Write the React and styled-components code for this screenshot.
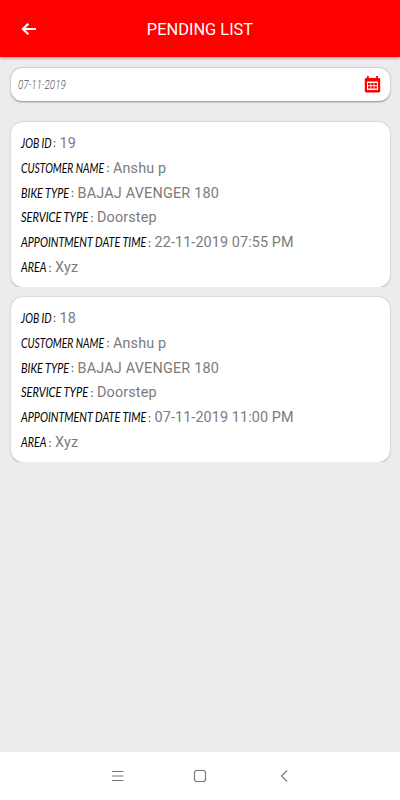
import React from "react";
import styled, { createGlobalStyle } from "styled-components";

const GlobalStyle = createGlobalStyle`
  * { box-sizing: border-box; }
  body { margin: 0; background: #edebee; font-family: Roboto, sans-serif; }
`;

const Screen = styled.div`
  display: flex;
  flex-direction: column;
  height: 800px;
  background: #edebee;
`;

const Header = styled.header`
  display: grid;
  grid-template-columns: 57px 1fr 57px;
  align-items: center;
  height: 57px;
  flex: none;
  background: #ff0000;
  color: #fff;
  box-shadow: 0 1px 3px rgba(0, 0, 0, 0.4);
`;

const BackButton = styled.button`
  display: flex;
  justify-content: center;
  padding: 0;
  border: 0;
  background: none;
  color: inherit;
`;

const Title = styled.h1`
  margin: 0;
  padding-top: 2px;
  font-size: 16.4px;
  font-weight: 400;
  line-height: 20px;
  text-align: center;
  white-space: nowrap;
`;

const Content = styled.main`
  flex: 1;
  padding: 11px 10px 0;
`;

const DateField = styled.div`
  display: flex;
  align-items: center;
  justify-content: space-between;
  height: 33px;
  margin: 0 0.5px;
  padding: 0 8.5px 0 7.5px;
  border-radius: 11px;
  background: #fff;
  box-shadow: 0 0.5px 2px rgba(0, 0, 0, 0.42);
`;

const DateText = styled.span`
  display: block;
  width: 48px;
  padding-top: 1px;
  color: #555;
  font: italic 300 12.5px/16px Roboto, sans-serif;
  white-space: nowrap;
  transform: scaleX(0.785);
  transform-origin: left center;
`;

const Jobs = styled.section`
  display: flex;
  flex-direction: column;
  gap: 10px;
  margin-top: 21px;
`;

const Card = styled.article`
  height: 165px;
  margin: 0 0.5px;
  padding: 9px 10.5px 0;
  border-radius: 12px;
  background: #fff;
  box-shadow: 0 0.5px 2px rgba(0, 0, 0, 0.26);
  clip-path: inset(-3px -3px 0 -3px);
`;

const Row = styled.div`
  display: flex;
  align-items: center;
  height: 24.85px;
  white-space: nowrap;
`;

const LabelBox = styled.span`
  flex: none;
  width: ${(p) => p.$width}px;
  padding-bottom: 2px;
`;

const Label = styled.span`
  display: inline-block;
  color: #000;
  font: italic 400 13.5px/18px Lato, sans-serif;
  transform: scaleX(${(p) => p.$scale});
  transform-origin: left center;
`;

const Colon = styled.span`
  width: 6.5px;
  flex: none;
  color: #555;
  font: 12px/18px Lato, sans-serif;
`;

const Value = styled.span`
  padding-top: 1px;
  color: #7b7b7b;
  font-size: 14.4px;
  line-height: 20px;
  letter-spacing: ${(p) => p.$spacing ?? 0.14}px;
`;

const NavBar = styled.nav`
  display: flex;
  justify-content: center;
  align-items: center;
  gap: 66px;
  height: 48px;
  flex: none;
  background: #fff;
  color: #777;
  & > svg { display: block; }
`;

const fields = [
  { key: "id", label: "JOB ID", width: 32, scale: 0.77 },
  { key: "customer", label: "CUSTOMER NAME", width: 85.5, scale: 0.765 },
  { key: "bike", label: "BIKE TYPE", width: 50, scale: 0.8, spacing: 0.2 },
  { key: "service", label: "SERVICE TYPE", width: 69.5, scale: 0.815 },
  { key: "time", label: "APPOINTMENT DATE TIME", width: 127, scale: 0.797, spacing: 0.1 },
  { key: "area", label: "AREA", width: 27.5, scale: 0.79 },
];

const common = { customer: "Anshu p", bike: "BAJAJ AVENGER 180", service: "Doorstep", area: "Xyz" };
const jobs = [
  { ...common, id: "19", time: "22-11-2019 07:55 PM" },
  { ...common, id: "18", time: "07-11-2019 11:00 PM" },
];

const BackIcon = () => (
  <svg width="16" height="14" viewBox="0 0 16 14" fill="none" stroke="currentColor" strokeWidth="2.2">
    <path d="M15 7H2.5M7.3 1.7L2 7l5.3 5.3" />
  </svg>
);

const CalendarIcon = () => (
  <svg width="17" height="17" viewBox="0 0 17 17" fill="#f00">
    <path fillRule="evenodd" d="M3 0h1.8v2h7.400V0H14v2h1.200l1 1v12.500l-1 1H1.800l-1-1V3l1-1H3zM3 5.500v8.500h11V5.500z" />
    <path d="M4 7h2.500v2.300H4zm3.200 0h2.500v2.300H7.200zm3.200 0h2.500v2.300h-2.500zM4 10.200h2.500v2.300H4zm3.200 0h2.500v2.300H7.200zm3.200 0h2.500v2.300h-2.500z" />
  </svg>
);

export default function App() {
  return (
    <Screen>
      <GlobalStyle />
      <Header>
        <BackButton aria-label="Back"><BackIcon /></BackButton>
        <Title>PENDING LIST</Title>
      </Header>
      <Content>
        <DateField>
          <DateText>07-11-2019</DateText>
          <CalendarIcon />
        </DateField>
        <Jobs>
          {jobs.map((job) => (
            <Card key={job.id}>
              {fields.map((f) => (
                <Row key={f.key}>
                  <LabelBox $width={f.width}><Label $scale={f.scale}>{f.label}</Label></LabelBox>
                  <Colon>:</Colon>
                  <Value $spacing={f.spacing}>{job[f.key]}</Value>
                </Row>
              ))}
            </Card>
          ))}
        </Jobs>
      </Content>
      <NavBar>
        <svg width="18" height="16" viewBox="0 0 18 16" stroke="currentColor" fill="none">
          <path d="M4 3.500h11.500M4 8h11.500M4 12.500h11.500" />
        </svg>
        <svg width="16" height="16" viewBox="0 0 16 16" stroke="currentColor" fill="none" strokeWidth="1.2">
          <rect x="2.5" y="2.5" width="11" height="11" rx="2.5" />
        </svg>
        <svg width="18" height="16" viewBox="0 0 18 16" stroke="currentColor" fill="none" strokeWidth="1.1">
          <path d="M13 2.500L7.500 8l5.500 5.500" />
        </svg>
      </NavBar>
    </Screen>
  );
}
